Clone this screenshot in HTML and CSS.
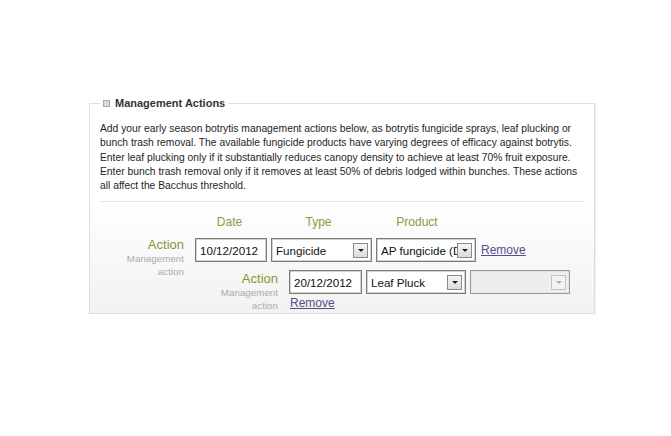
FILE: index.html
```html
<!DOCTYPE html>
<html>
<head>
<meta charset="utf-8">
<link rel="stylesheet" href="styles.css">
</head>
<body>
<div class="page">
  <fieldset class="panel">
    <legend class="legend"><span class="sq"></span>Management Actions</legend>
    <p class="intro">Add your early season botrytis management actions below, as botrytis fungicide sprays, leaf plucking or bunch trash removal. The available fungicide products have varying degrees of efficacy against botrytis. Enter leaf plucking only if it substantially reduces canopy density to achieve at least 70% fruit exposure. Enter bunch trash removal only if it removes at least 50% of debris lodged within bunches. These actions all affect the Bacchus threshold.</p>
    <div class="sep"></div>
    <div class="heads">
      <span class="head h-date">Date</span>
      <span class="head h-type">Type</span>
      <span class="head h-prod">Product</span>
    </div>
    <div class="row row1">
      <div class="label">
        <span class="lab-main">Action</span>
        <span class="lab-sub">Management<br>action</span>
      </div>
      <div class="controls">
        <input class="date" type="text" value="10/12/2012">
        <div class="select w101"><span class="val">Fungicide</span><span class="btn"><span class="tri"></span></span></div>
        <div class="select w100"><span class="val">AP fungicide (D</span><span class="btn"><span class="tri"></span></span></div>
        <a class="remove" href="#">Remove</a>
      </div>
    </div>
    <div class="row row2">
      <div class="label">
        <span class="lab-main">Action</span>
        <span class="lab-sub">Management<br>action</span>
      </div>
      <div class="stack">
        <div class="controls">
          <input class="date d2" type="text" value="20/12/2012">
          <div class="select w100"><span class="val">Leaf Pluck</span><span class="btn"><span class="tri"></span></span></div>
          <div class="select w100 disabled"><span class="val"></span><span class="btn"><span class="tri"></span></span></div>
        </div>
        <a class="remove" href="#">Remove</a>
      </div>
    </div>
  </fieldset>
</div>
</body>
</html>
```

FILE: styles.css
```css
html, body {
  margin: 0;
  padding: 0;
  background: #ffffff;
}

body {
  font-family: "Liberation Sans", Arial, sans-serif;
  color: #222;
}

.page {
  padding: 96px 0 0 89px;
}

.panel {
  box-sizing: border-box;
  width: 506px;
  margin: 0;
  padding: 12px 11px 1px 10px;
  border: 1px solid #dedede;
  background: linear-gradient(to bottom, #ffffff 45%, #f2f2f2 100%);
  box-shadow: 1px 1px 0 #f0f0f0;
}

.legend {
  padding: 0 3px;
  font-size: 11px;
  font-weight: bold;
  line-height: 14px;
  color: #333;
  display: flex;
  align-items: center;
}

.sq {
  display: inline-block;
  width: 5px;
  height: 5px;
  border: 1px solid #a9a9a9;
  background: #d9d9d9;
  margin-right: 5px;
}

.intro {
  margin: 0;
  font-size: 10.3px;
  line-height: 14.3px;
  color: #1e1e1e;
}

.sep {
  height: 1px;
  background: #e2e2e2;
  margin: 8px 0 12px;
}

.heads {
  display: flex;
  gap: 4px;
  margin-left: 95px;
  height: 16px;
  line-height: 16px;
  margin-bottom: 8px;
}

.head {
  font-size: 12px;
  color: #8b9a3a;
  text-align: center;
}

.h-date { width: 69px; }
.h-type { width: 101px; }
.h-prod { width: 88px; }

.row {
  display: flex;
  align-items: flex-start;
  gap: 11px;
}

.row1 {
  height: 32px;
}

.row2 {
  margin-left: 93px;
}

.label {
  width: 84px;
  display: flex;
  flex-direction: column;
  align-items: flex-end;
  text-align: right;
}

.row2 .label {
  width: 85px;
  padding-top: 2px;
}

.lab-main {
  font-size: 13px;
  line-height: 14px;
  color: #879733;
}

.lab-sub {
  font-size: 9.8px;
  line-height: 13px;
  color: #ababab;
}

.controls {
  display: flex;
  align-items: center;
  gap: 4px;
}

.stack {
  display: flex;
  flex-direction: column;
  align-items: flex-start;
}

.date {
  box-sizing: border-box;
  width: 72px;
  height: 24px;
  margin: 0;
  padding: 0 0 0 4px;
  border: 1px solid #7a7a7a;
  box-shadow: inset 0 0 0 1px #d2d2d2;
  font-family: "Liberation Sans", Arial, sans-serif;
  font-size: 11.6px;
  color: #111;
  background: #fff;
  outline: none;
}

.d2 {
  width: 73px;
}

.select {
  box-sizing: border-box;
  height: 24px;
  display: flex;
  align-items: center;
  padding: 0 3px 0 4px;
  border: 1px solid #7a7a7a;
  box-shadow: inset 0 0 0 1px #d2d2d2;
  background: #fff;
}

.w101 { width: 101px; }
.w100 { width: 100px; }

.val {
  flex: 1;
  min-width: 0;
  overflow: hidden;
  white-space: nowrap;
  font-size: 11.6px;
  color: #111;
}

.btn {
  box-sizing: border-box;
  width: 15px;
  height: 15px;
  flex: none;
  display: flex;
  align-items: center;
  justify-content: center;
  border: 1px solid #8a8a8a;
  background: linear-gradient(#f4f4f4, #dcdcdc);
}

.tri {
  width: 0;
  height: 0;
  border-left: 3px solid transparent;
  border-right: 3px solid transparent;
  border-top: 3px solid #222;
  margin-top: 1px;
}

.disabled {
  background: #eeeeee;
  border-color: #9a9a9a;
  box-shadow: inset 0 0 0 1px #e4e4e4;
}

.disabled .btn {
  border-color: #c4c4c4;
  background: #f3f3f3;
}

.disabled .tri {
  border-top-color: #aaa;
}

.remove {
  font-size: 12px;
  line-height: 14px;
  color: #5a4a8c;
  text-decoration: underline;
}

.row1 .remove {
  margin-left: 1px;
}

.stack .remove {
  margin-top: 2px;
  margin-left: 1px;
}
```
